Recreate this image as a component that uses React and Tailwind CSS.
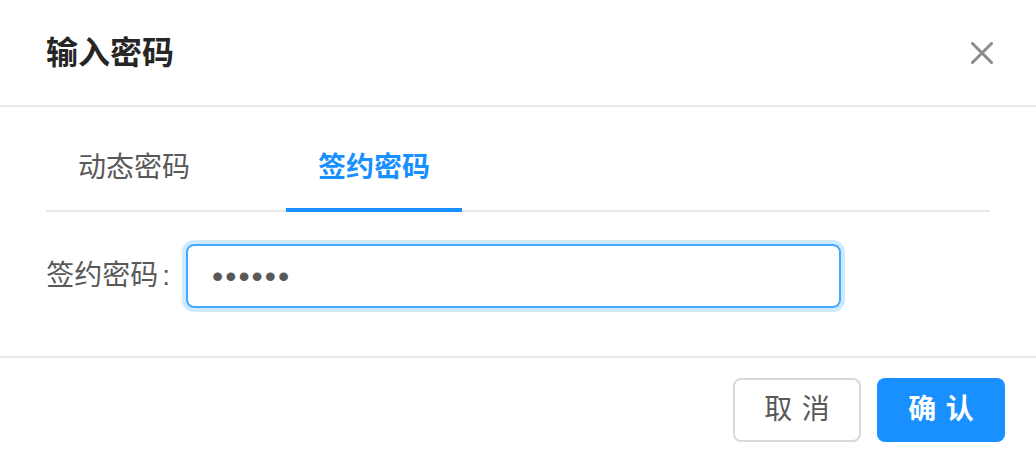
import React from "react";

const font = "font-['Liberation_Sans','Noto_Sans_CJK_SC',sans-serif]";

const tabs = [
  { id: 1, label: "动态密码" },
  { id: 2, label: "签约密码" },
];

export default function App() {
  const [active, setActive] = React.useState(2);

  return (
    <div className={`w-full h-[458px] overflow-hidden bg-white ${font}`}>
      {/* header */}
      <div className="h-[107px] flex items-center justify-between pl-[46px] pr-[34px] border-b-2 border-[#e8e8e8]">
        <h2 className="text-[32px] leading-[44px] font-semibold text-[#262626]">输入密码</h2>
        <button className="w-[40px] h-[40px] flex items-center justify-center">
          <svg width="22" height="22" viewBox="0 0 22 22">
            <path d="M1.5 1.5L20.5 20.5M20.5 1.5L1.5 20.5" stroke="#8c8c8c" strokeWidth="3" strokeLinecap="round" />
          </svg>
        </button>
      </div>

      {/* body */}
      <div className="px-[46px] pt-[15px] pb-[48px]">
        <div className="flex border-b-2 border-[#e8e8e8]">
          {tabs.map((t) => (
            <div
              key={t.id}
              onClick={() => setActive(t.id)}
              className={`relative px-[32px] pt-6 pb-5 mr-[64px] text-[28px] leading-[44px] cursor-pointer ${
                active === t.id ? "text-[#1890ff] font-semibold" : "text-[#595959]"
              }`}
            >
              {t.label}
              {active === t.id && <span className="absolute left-0 right-0 -bottom-[2px] h-[4px] bg-[#1890ff]" />}
            </div>
          ))}
        </div>

        <div className="flex items-center mt-[32px]">
          <label className="w-[140px] flex justify-end text-[28px] text-[#595959] pr-[16px]">
            签约密码<span className="ml-[4px]">:</span>
          </label>
          <input
            type="password"
            readOnly
            defaultValue="123456"
            className="w-[655px] h-[64px] px-[24px] rounded-[8px] border-2 border-[#40a9ff] shadow-[0_0_0_4px_rgba(24,144,255,0.2)] outline-none text-[32px] tracking-[2px] text-[#595959]"
          />
        </div>
      </div>

      {/* footer */}
      <div className="border-t-2 border-[#e8e8e8] flex justify-end gap-[16px] pt-[20px] pr-[31px]">
        <button className="w-[128px] h-[64px] rounded-[8px] border-2 border-[#d9d9d9] bg-white text-[28px] text-[#595959]">
          <span className="tracking-[0.34em] -mr-[0.34em]">取消</span>
        </button>
        <button className="w-[128px] h-[64px] rounded-[8px] bg-[#1890ff] text-[28px] text-white font-semibold">
          <span className="tracking-[0.34em] -mr-[0.34em]">确认</span>
        </button>
      </div>
    </div>
  );
}
